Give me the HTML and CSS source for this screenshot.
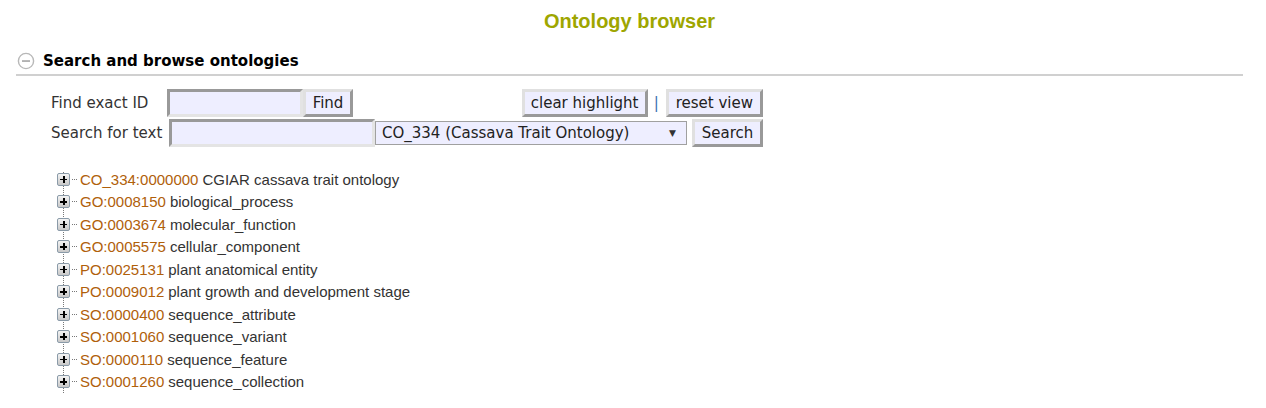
FILE: index.html
```html
<!DOCTYPE html>
<html>
<head>
<meta charset="utf-8">
<title>Ontology browser</title>
<link rel="stylesheet" href="styles.css">
</head>
<body>
<div class="page">
  <h1 class="title">Ontology browser</h1>
  <div class="section-head">
    <svg class="collapse-icon" width="18" height="18" viewBox="0 0 18 18">
      <circle cx="9" cy="9" r="7.6" fill="#fff" stroke="#b8b8b8" stroke-width="1.4"/>
      <rect x="5" y="8.2" width="8" height="1.7" fill="#aaa"/>
    </svg>
    <span class="section-title">Search and browse ontologies</span>
  </div>
  <div class="section-body">
    <div class="search-form">
      <div class="form-row">
        <label class="form-label">Find exact ID</label>
        <input class="text-input id-input" type="text">
        <button class="btn find-btn">Find</button>
        <div class="row-tools">
          <button class="btn clear-btn">clear highlight</button>
          <span class="sep">|</span>
          <button class="btn">reset view</button>
        </div>
      </div>
      <div class="form-row">
        <label class="form-label">Search for text</label>
        <input class="text-input search-input" type="text">
        <div class="select-box"><span>CO_334 (Cassava Trait Ontology)</span><span class="arrow">▼</span></div>
        <button class="btn search-btn">Search</button>
      </div>
    </div>
    <ul class="tree">
      <li class="node"><span class="expander"></span><span class="dots"></span><span class="term-id">CO_334:0000000</span> <span class="term-name">CGIAR cassava trait ontology</span></li>
      <li class="node"><span class="expander"></span><span class="dots"></span><span class="term-id">GO:0008150</span> <span class="term-name">biological_process</span></li>
      <li class="node"><span class="expander"></span><span class="dots"></span><span class="term-id">GO:0003674</span> <span class="term-name">molecular_function</span></li>
      <li class="node"><span class="expander"></span><span class="dots"></span><span class="term-id">GO:0005575</span> <span class="term-name">cellular_component</span></li>
      <li class="node"><span class="expander"></span><span class="dots"></span><span class="term-id">PO:0025131</span> <span class="term-name">plant anatomical entity</span></li>
      <li class="node"><span class="expander"></span><span class="dots"></span><span class="term-id">PO:0009012</span> <span class="term-name">plant growth and development stage</span></li>
      <li class="node"><span class="expander"></span><span class="dots"></span><span class="term-id">SO:0000400</span> <span class="term-name">sequence_attribute</span></li>
      <li class="node"><span class="expander"></span><span class="dots"></span><span class="term-id">SO:0001060</span> <span class="term-name">sequence_variant</span></li>
      <li class="node"><span class="expander"></span><span class="dots"></span><span class="term-id">SO:0000110</span> <span class="term-name">sequence_feature</span></li>
      <li class="node"><span class="expander"></span><span class="dots"></span><span class="term-id">SO:0001260</span> <span class="term-name">sequence_collection</span></li>
    </ul>
  </div>
</div>
</body>
</html>
```

FILE: styles.css
```css
html, body {
  margin: 0;
  padding: 0;
  background: #fff;
}
body {
  font-family: "DejaVu Sans", Verdana, sans-serif;
  color: #333;
}
.page {
  padding: 0 23px 0 16px;
}
.title {
  margin: 0;
  padding-top: 9px;
  height: 31px;
  text-align: center;
  font-family: "Liberation Sans", Arial, sans-serif;
  font-weight: bold;
  font-size: 20px;
  line-height: 24px;
  color: #9ea600;
}
.section-head {
  display: flex;
  align-items: center;
  gap: 8px;
  height: 36px;
  padding-top: 8px;
  border-bottom: 2px solid #d0d0d0;
  padding-left: 1px;
  box-sizing: border-box;
}
.collapse-icon {
  display: block;
}
.section-title {
  font-weight: bold;
  font-size: 15px;
  color: #000;
}
.section-body {
  padding-left: 35px;
  padding-top: 13px;
}
.search-form {
  display: inline-flex;
  flex-direction: column;
  gap: 2px;
}
.form-row {
  display: flex;
  align-items: center;
  height: 28px;
}
.form-label {
  font-size: 15px;
  color: #333;
  width: 116px;
}
.text-input {
  box-sizing: border-box;
  height: 28px;
  margin: 0;
  background: #eeeeff;
  border: 3px solid;
  border-color: #999 #e4e4e4 #e4e4e4 #999;
  padding: 0 4px;
  font: inherit;
}
.id-input {
  width: 136px;
}
.search-input {
  width: 206px;
  margin-left: 2px;
}
.btn {
  box-sizing: border-box;
  height: 28px;
  margin: 0;
  background: #eeeeff;
  border: 3px solid;
  border-color: #e0e0e0 #999 #999 #e0e0e0;
  padding: 0 7px;
  font-family: "DejaVu Sans", Verdana, sans-serif;
  font-size: 15px;
  color: #222;
  white-space: nowrap;
  cursor: pointer;
}
.find-btn {
  width: 50px;
  padding: 0;
}
.row-tools {
  margin-left: auto;
  display: flex;
  align-items: center;
}
.clear-btn {
  width: 126px;
  padding: 0;
}
.sep {
  color: #3a6fb0;
  font-size: 15px;
  margin: 0 7px 0 6px;
}
.select-box {
  box-sizing: border-box;
  width: 312px;
  height: 24px;
  margin-left: 0;
  border: 1px solid #a0a0a0;
  background: #eeeeff;
  display: flex;
  align-items: center;
  justify-content: space-between;
  padding: 0 10px 0 6px;
  font-size: 15px;
  color: #222;
}
.arrow {
  font-size: 9px;
  color: #333;
}
.search-btn {
  width: 71px;
  padding: 0;
  margin-left: 5px;
}
.tree {
  list-style: none;
  margin: 21px 0 0 0;
  padding: 0 0 0 6px;
  position: relative;
  font-family: "Liberation Sans", Arial, sans-serif;
  font-size: 15px;
}
.tree::before {
  content: "";
  position: absolute;
  left: 12px;
  top: 4px;
  bottom: -12px;
  border-left: 1px dotted #777;
}
.node {
  display: flex;
  align-items: center;
  height: 22.5px;
  position: relative;
}
.expander {
  box-sizing: border-box;
  width: 13px;
  height: 13px;
  border: 1px solid #8a9aa8;
  border-radius: 2px;
  background: linear-gradient(#f4f4f4, #c8c8c8);
  position: relative;
  flex: none;
}
.expander::before {
  content: "";
  position: absolute;
  left: 2px;
  top: 5px;
  width: 7px;
  height: 1.5px;
  background: #000;
}
.expander::after {
  content: "";
  position: absolute;
  left: 5px;
  top: 2px;
  width: 1.5px;
  height: 7px;
  background: #000;
}
.dots {
  width: 5px;
  margin: 0 3px 0 2px;
  border-top: 1px dotted #777;
  flex: none;
}
.term-id {
  color: #b0600a;
  white-space: pre;
}
.term-name {
  color: #333;
  margin-left: 4px;
}
```
